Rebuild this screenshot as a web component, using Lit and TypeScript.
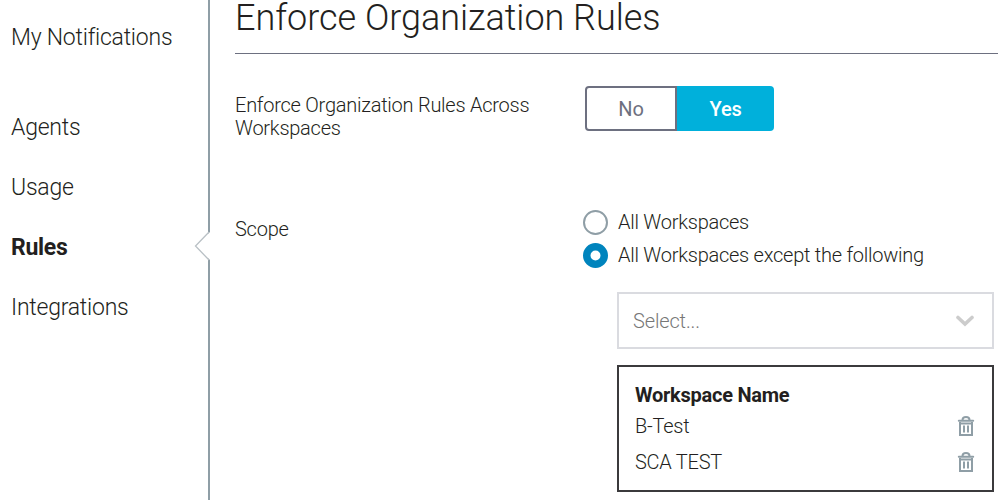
import { LitElement, html, css, svg } from 'lit';
import { customElement } from 'lit/decorators.js';

@customElement('app-root')
export class AppRoot extends LitElement {
  static styles = css`
    :host { display: flex; width: 998px; height: 500px; overflow: hidden; background: #fff; color: #231f20; font-family: Roboto, sans-serif; font-weight: 300; box-sizing: border-box; }
    * { box-sizing: border-box; }
    nav { width: 210px; flex: none; border-right: 2px solid #8f9ea6; padding: 23px 0 0 11px; display: flex; flex-direction: column; font-size: 23px; letter-spacing: -0.23px; line-height: 30px; position: relative; gap: 30px; }
    .gap { margin-bottom: 30px; }
    .active { font-weight: 700; letter-spacing: -0.3px; }
    .notch { position: absolute; left: 194px; top: 230px; width: 16px; height: 32px; }
    main { flex: 1; padding-left: 25px; }
    h1 { margin: 0; height: 54px; border-bottom: 1px solid #6d7080; font-weight: 300; font-size: 36px; letter-spacing: -0.03px; line-height: 36px; white-space: nowrap; }
    .row { display: flex; font-size: 20px; letter-spacing: -0.25px; line-height: 23px; }
    .label { width: 350px; flex: none; white-space: nowrap; }
    .first { padding-top: 32px; height: 156px; }
    .first .label { padding-top: 8px; }
    .toggle { display: flex; height: 45px; width: 189px; font-size: 20px; letter-spacing: 0; text-align: center; }
    .no { width: 92px; border: 2px solid #6d7080; border-radius: 4px 0 0 4px; color: #6d7080; font-weight: 400; line-height: 42px; }
    .yes { flex: 1; background: #00b0db; color: #fff; border-radius: 0 4px 4px 0; line-height: 46px; font-weight: 500; letter-spacing: -0.2px; }
    .second .label { padding-top: 8px; }
    .opts { flex: 1; margin-left: -2px; }
    .opt { display: flex; gap: 10px; height: 33px; align-items: flex-start; line-height: 25px; }
    .opt svg { width: 25px; height: 25px; flex: none; }
    .select { margin: 16px 4px 0 34px; height: 57px; border: 2px solid #dadbe0; color: #777; display: flex; align-items: center; justify-content: space-between; padding: 0 17px 0 14px; line-height: 25px; letter-spacing: -0.15px; }
    .select span { padding-top: 1px; }
    .list { margin: 16px 4px 0 34px; height: 127px; border: 2px solid #3b3a3c; padding: 17px 17px 0 16px; }
    .head { font-weight: 700; line-height: 23px; height: 24px; }
    .item { display: flex; justify-content: space-between; align-items: center; height: 36px; }
    .item span { margin-top: 1px; }
    .item svg { display: block; }
  `;

  trash() {
    return html`<svg width="18" height="22" viewBox="0 0 18 22" fill="none" stroke="#8f9ea6"><path d="M5.500 5C5.500 1 12.500 1 12.500 5" stroke-width="2"/><path d="M1.800 5.800h14.400" stroke-width="2" stroke-linecap="round"/><path d="M3 7V20H15V7M3 8.500H15" stroke-width="2"/><path d="M7 10.500v7M11 10.500v7" stroke-width="2"/></svg>`;
  }

  radio(on: boolean) {
    return html`<svg viewBox="0 0 25 25">${on
      ? svg`<circle cx="12.500" cy="12.500" r="8.750" fill="#fff" stroke="#0084bd" stroke-width="7.500"/>`
      : svg`<circle cx="12.500" cy="12.500" r="11.500" fill="#fff" stroke="#8f9ea6" stroke-width="2"/>`}</svg>`;
  }

  render() {
    return html`
      <nav>
        <span class="gap">My Notifications</span><span>Agents</span><span>Usage</span><span class="active">Rules</span><span>Integrations</span>
        <svg class="notch" viewBox="0 0 16 32"><path d="M16 2V30L1 16Z" fill="#fff"/><path d="M15 2L1.500 16L15 30" fill="none" stroke="#b9c0c5" stroke-width="1.300"/></svg>
      </nav>
      <main>
        <h1>Enforce Organization Rules</h1>
        <div class="row first"><div class="label">Enforce Organization Rules Across<br>Workspaces</div><div class="toggle"><div class="no">No</div><div class="yes">Yes</div></div></div>
        <div class="row second"><div class="label">Scope</div>
          <div class="opts">
            <div class="opt">${this.radio(false)}<span>All Workspaces</span></div>
            <div class="opt">${this.radio(true)}<span>All Workspaces except the following</span></div>
            <div class="select"><span>Select...</span><svg width="20" height="12" viewBox="0 0 20 12"><path d="M3 2.500l7 6.500 7-6.500" fill="none" stroke="#ccc" stroke-width="3.600" stroke-linecap="round"/></svg></div>
            <div class="list"><div class="head">Workspace Name</div>
              ${['B-Test', 'SCA TEST'].map(n => html`<div class="item"><span>${n}</span>${this.trash()}</div>`)}
            </div>
          </div>
        </div>
      </main>`;
  }
}
